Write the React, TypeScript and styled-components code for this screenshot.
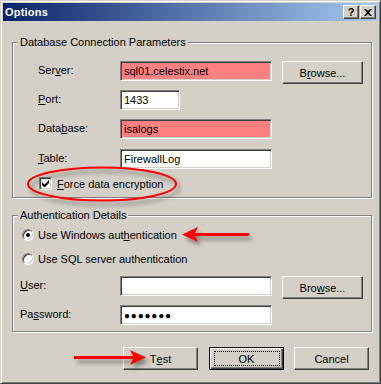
import React from 'react';
import styled, { createGlobalStyle, css } from 'styled-components';

const GlobalStyle = createGlobalStyle`
  html, body {
    margin: 0;
    padding: 0;
    background: #d4d0c8;
  }
  body {
    font-family: 'Liberation Sans', Arial, sans-serif;
    font-size: 11px;
    color: #000;
  }
`;

const raised = css`
  border: 1px solid;
  border-color: #fff #404040 #404040 #fff;
  box-shadow: inset -1px -1px 0 #808080;
`;

const sunken = css`
  border: 1px solid;
  border-color: #808080 #fff #fff #808080;
  box-shadow: inset 1px 1px 0 #404040, inset -1px -1px 0 #d4d0c8;
`;

const Window = styled.div`
  position: relative;
  box-sizing: border-box;
  width: 381px;
  height: 384px;
  padding: 2px;
  background: #d4d0c8;
  border: 1px solid;
  border-color: #d4d0c8 #404040 #404040 #d4d0c8;
  box-shadow: inset 1px 1px 0 #fff, inset -1px -1px 0 #808080;
`;

const TitleBar = styled.div`
  display: flex;
  align-items: center;
  justify-content: space-between;
  height: 18px;
  padding: 0 2px 0 2px;
  background: linear-gradient(90deg, #0a246a 0%, #a6caf0 100%);
`;

const Title = styled.span`
  color: #fff;
  font-weight: bold;
  font-size: 11px;
  letter-spacing: 0.2px;
`;

const CaptionButtons = styled.div`
  display: flex;
  gap: 1px;
`;

const CaptionButton = styled.div`
  ${raised};
  box-sizing: border-box;
  width: 16px;
  height: 14px;
  background: #d4d0c8;
  display: flex;
  align-items: center;
  justify-content: center;
  font-weight: bold;
  font-size: 11px;
  line-height: 1;
`;

const Body = styled.div`
  display: flex;
  flex-direction: column;
  padding: 21px 0 0 9px;
`;

const Group = styled.div<{ $pad: string; $gap?: number }>`
  position: relative;
  box-sizing: border-box;
  width: 360px;
  border: 1px solid #808080;
  box-shadow: inset 1px 1px 0 #fff, 1px 1px 0 #fff;
  padding: ${p => p.$pad};
  margin-top: ${p => p.$gap ?? 0}px;
  display: flex;
  flex-direction: column;
`;

const Legend = styled.span`
  position: absolute;
  top: -7px;
  left: 5px;
  padding: 0 2px;
  background: #d4d0c8;
  line-height: 13px;
`;

const FieldRow = styled.div<{ $top?: number }>`
  display: flex;
  align-items: flex-start;
  height: 20px;
  margin-top: ${p => p.$top ?? 0}px;
`;

const Label = styled.span<{ $width: number }>`
  width: ${p => p.$width}px;
  line-height: 18px;
`;

const Key = styled.span`
  text-decoration: underline;
  text-underline-offset: 1px;
`;

const TextBox = styled.div<{ $width: number; $warn?: boolean }>`
  ${sunken};
  box-sizing: border-box;
  width: ${p => p.$width}px;
  height: 20px;
  padding: 0 3px;
  line-height: 18px;
  background: ${p => (p.$warn ? '#ff8080' : '#fff')};
  white-space: nowrap;
  overflow: hidden;
`;

const Dots = styled.span`
  font-size: 10px;
  letter-spacing: 0.8px;
`;

const Button = styled.div<{ $width: number; $default?: boolean }>`
  position: relative;
  box-sizing: border-box;
  width: ${p => p.$width}px;
  height: 23px;
  display: flex;
  align-items: center;
  justify-content: center;
  background: #d4d0c8;
  ${p =>
    p.$default
      ? css`
          border: 1px solid #000;
          box-shadow: inset 1px 1px 0 #fff, inset -1px -1px 0 #404040,
            inset -2px -2px 0 #808080;
          &::after {
            content: '';
            position: absolute;
            inset: 3px 3px 3px 4px;
            border: 1px dotted #000;
          }
        `
      : raised};
`;

const BrowseButton = styled(Button)`
  margin-left: 10px;
`;

const CheckRow = styled.label`
  display: flex;
  align-items: center;
  height: 13px;
  margin: 8px 0 0 1px;
  gap: 5px;
`;

const CheckBox = styled.span`
  ${sunken};
  box-sizing: border-box;
  width: 13px;
  height: 13px;
  background: #fff;
  display: flex;
  align-items: center;
  justify-content: center;
`;

const RadioRow = styled.label<{ $top: number }>`
  display: flex;
  align-items: center;
  height: 13px;
  margin: ${p => p.$top}px 0 0 2px;
  gap: 4px;
`;

const Radio = styled.span<{ $on?: boolean }>`
  position: relative;
  box-sizing: border-box;
  width: 12px;
  height: 12px;
  border-radius: 50%;
  background: #fff;
  border: 1px solid;
  border-color: #808080 #fff #fff #808080;
  box-shadow: inset 1px 1px 0 #404040, inset -1px -1px 0 #d4d0c8;
  &::after {
    content: '';
    display: ${p => (p.$on ? 'block' : 'none')};
    position: absolute;
    left: 3px;
    top: 3px;
    width: 4px;
    height: 4px;
    border-radius: 50%;
    background: #000;
  }
`;

const ButtonBar = styled.div`
  display: flex;
  justify-content: flex-end;
  gap: 11px;
  box-sizing: border-box;
  width: 360px;
  padding-right: 3px;
  margin-top: 15px;
`;

const CancelButton = styled(Button)`
  margin-left: -1px;
`;

const Annotations = styled.svg`
  position: absolute;
  left: 0;
  top: 0;
  width: 381px;
  height: 384px;
  pointer-events: none;
`;

export default function App() {
  return (
    <>
      <GlobalStyle />
      <Window>
        <TitleBar>
          <Title>Options</Title>
          <CaptionButtons>
            <CaptionButton>?</CaptionButton>
            <CaptionButton>
              <svg width="8" height="7" viewBox="0 0 8 7">
                <path d="M0 0h2l2 2 2-2h2L5 3.5 8 7H6L4 5 2 7H0l3-3.5z" fill="#000" />
              </svg>
            </CaptionButton>
          </CaptionButtons>
        </TitleBar>

        <Body>
          <Group $pad="18px 0 7px 25px">
            <Legend>Database Connection Parameters</Legend>
            <FieldRow>
              <Label $width={82}>
                Ser<Key>v</Key>er:
              </Label>
              <TextBox $width={152} $warn>
                sql01.celestix.net
              </TextBox>
              <BrowseButton $width={81}>
                B<Key>r</Key>owse...
              </BrowseButton>
            </FieldRow>
            <FieldRow $top={9}>
              <Label $width={82}>
                <Key>P</Key>ort:
              </Label>
              <TextBox $width={60}>1433</TextBox>
            </FieldRow>
            <FieldRow $top={9}>
              <Label $width={82}>
                Data<Key>b</Key>ase:
              </Label>
              <TextBox $width={152} $warn>
                isalogs
              </TextBox>
            </FieldRow>
            <FieldRow $top={10}>
              <Label $width={82}>
                <Key>T</Key>able:
              </Label>
              <TextBox $width={152}>FirewallLog</TextBox>
            </FieldRow>
            <CheckRow>
              <CheckBox>
                <svg width="7" height="7" viewBox="0 0 7 7">
                  <path d="M0 2v3l2 2h1l4-4V0L2.5 4.5z" fill="#000" />
                </svg>
              </CheckBox>
              <span>
                <Key>F</Key>orce data encryption
              </span>
            </CheckRow>
          </Group>

          <Group $pad="0 0 6px 7px" $gap={17}>
            <Legend>Authentication Details</Legend>
            <RadioRow $top={12}>
              <Radio $on />
              <span>
                Use Windows aut<Key>h</Key>entication
              </span>
            </RadioRow>
            <RadioRow $top={11}>
              <Radio />
              <span>Use SQL server authentication</span>
            </RadioRow>
            <FieldRow $top={11}>
              <Label $width={100}>
                <Key>U</Key>ser:
              </Label>
              <TextBox $width={152} />
              <BrowseButton $width={81}>
                Bro<Key>w</Key>se...
              </BrowseButton>
            </FieldRow>
            <FieldRow $top={9}>
              <Label $width={100}>
                Pa<Key>s</Key>sword:
              </Label>
              <TextBox $width={152}>
                <Dots>●●●●●●●</Dots>
              </TextBox>
            </FieldRow>
          </Group>

          <ButtonBar>
            <Button $width={75}>
              T<Key>e</Key>st
            </Button>
            <Button $width={75} $default>
              OK
            </Button>
            <CancelButton $width={75}>Cancel</CancelButton>
          </ButtonBar>
        </Body>

        <Annotations viewBox="0 0 381 384">
          <defs>
            <filter id="shade" x="-20%" y="-40%" width="140%" height="200%">
              <feDropShadow dx="3" dy="4" stdDeviation="2" floodColor="#000" floodOpacity="0.4" />
            </filter>
          </defs>
          <g filter="url(#shade)">
            <ellipse cx="101" cy="183" rx="74" ry="16.5" fill="none" stroke="#f00" strokeWidth="2" />
            <path d="M181 233.5L197 226 194 232H248V235H194L197 241Z" fill="#f00" />
            <path d="M145 356.5L129 349 132 355H73V358H132L129 364Z" fill="#f00" />
          </g>
        </Annotations>
      </Window>
    </>
  );
}
